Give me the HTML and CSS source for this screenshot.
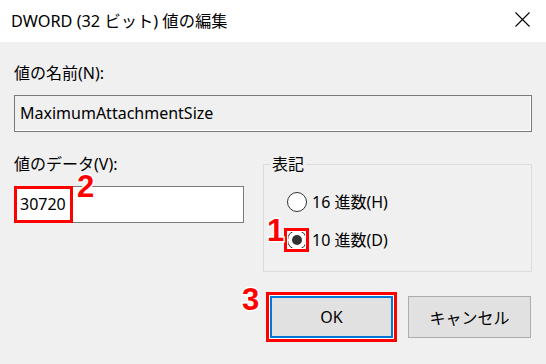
FILE: index.html
```html
<!DOCTYPE html>
<html lang="ja">
<head>
<meta charset="utf-8">
<link rel="stylesheet" href="styles.css">
</head>
<body>
<div class="dialog">
  <div class="titlebar">
    <span class="title">DWORD (32 ビット) 値の編集</span>
    <svg class="close" width="15" height="15" viewBox="0 0 15 15"><path d="M0.5 0.5 L14.5 14.5 M14.5 0.5 L0.5 14.5" stroke="#000" stroke-width="1.1" fill="none"/></svg>
  </div>
  <div class="content">
    <div class="label">値の名前(N):</div>
    <div class="namebox">MaximumAttachmentSize</div>
    <div class="lower">
      <div class="leftcol">
        <div class="label">値のデータ(V):</div>
        <div class="datawrap">
          <div class="databox">30720</div>
          <div class="mark mark-data"></div>
          <span class="num num2">2</span>
        </div>
      </div>
      <div class="rightcol">
        <fieldset class="group">
          <legend class="legend">表記</legend>
          <div class="radio-row">
            <span class="radio"></span><span class="radio-text">16 進数(H)</span>
          </div>
          <div class="radio-row">
            <span class="radio checked"></span><span class="radio-text">10 進数(D)</span>
            <div class="mark mark-radio"></div>
            <span class="num num1">1</span>
          </div>
        </fieldset>
        <div class="buttons">
          <div class="okwrap">
            <div class="btn btn-ok">OK</div>
            <div class="mark mark-ok"></div>
            <span class="num num3">3</span>
          </div>
          <div class="btn">キャンセル</div>
        </div>
      </div>
    </div>
  </div>
</div>
</body>
</html>
```
FILE: styles.css
```css
* { box-sizing: border-box; }
html, body { margin: 0; padding: 0; }
body {
  width: 546px;
  height: 364px;
  background: #f0f0f0;
  font-family: "Noto Sans", "Noto Sans CJK JP", sans-serif;
  font-size: 16px;
  color: #000;
  overflow: hidden;
}
.dialog { width: 546px; height: 364px; }
.titlebar {
  height: 42px;
  background: #fff;
  display: flex;
  align-items: center;
  padding: 0 16px 0 11px;
}
.title { font-size: 16.3px; line-height: 22px; margin-top: -1px; }
.close { margin-left: auto; display: block; margin-top: -3px; }
.content { padding: 20px 14px 0 14px; }
.label { line-height: 22px; height: 22px; }
.namebox {
  margin-top: 11px;
  height: 37px;
  border: 1px solid #7a7a7a;
  box-shadow: inset -1px -1px 0 #fff, inset 1px 1px 0 #f0f0f0;
  background: #f0f0f0;
  padding-left: 5px;
  line-height: 35px;
}
.lower {
  margin-top: 21px;
  display: flex;
  gap: 19px;
}
.leftcol { width: 230px; }
.datawrap { position: relative; margin-top: 11px; }
.databox {
  height: 37px;
  background: #fff;
  border: 1px solid #7a7a7a;
  padding-left: 5px;
  line-height: 35px;
}
.rightcol { width: 269px; }
.group {
  margin: 0;
  border: 1px solid #dcdcdc;
  padding: 15px 0 19px 23px;
  min-width: 0;
}
.legend {
  padding: 0 2px;
  margin-left: -17px;
  line-height: 22px;
}
.radio-row {
  position: relative;
  height: 24px;
  display: flex;
  align-items: center;
  gap: 5px;
}
.radio-row + .radio-row { margin-top: 14px; }
.radio {
  width: 20px;
  height: 20px;
  border-radius: 50%;
  border: 1px solid #333;
  background: #fff;
  display: flex;
  align-items: center;
  justify-content: center;
}
.radio.checked::after {
  content: "";
  width: 10px;
  height: 10px;
  border-radius: 50%;
  background: #333;
}
.radio-text { line-height: 24px; }
.buttons {
  margin-top: 24px;
  display: flex;
  justify-content: flex-end;
  gap: 15px;
  padding-right: 1px;
}
.okwrap { position: relative; }
.btn {
  width: 123px;
  height: 42px;
  background: #e1e1e1;
  border: 1px solid #adadad;
  display: flex;
  align-items: center;
  justify-content: center;
}
.btn-ok { border: 2px solid #0078d7; }
.mark {
  position: absolute;
  border: 3px solid #f00;
  box-shadow: inset 0 0 0 1px #fff;
  pointer-events: none;
}
.mark-data { left: 0; top: 0; width: 59px; height: 37px; }
.mark-radio { left: -3px; top: 0; width: 25px; height: 24px; }
.mark-ok { left: -4px; top: -4px; width: 131px; height: 50px; }
.num {
  position: absolute;
  font-family: "Liberation Sans", Arial, sans-serif;
  font-weight: bold;
  font-size: 31px;
  line-height: 20px;
  color: #f00;
  -webkit-text-stroke: 3px #fff;
  paint-order: stroke fill;
}
.num2 { left: 63px; top: -9px; }
.num1 { left: -20px; top: -7px; }
.num3 { left: -28px; top: -6px; }
```
